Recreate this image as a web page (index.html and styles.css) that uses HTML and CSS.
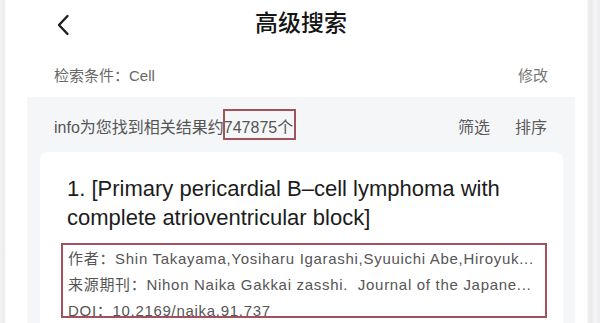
FILE: index.html
```html
<!DOCTYPE html>
<html lang="zh-CN">
<head>
<meta charset="utf-8">
<title>高级搜索</title>
<link rel="stylesheet" href="styles.css">
</head>
<body>
<div class="screen">
  <div class="edge-left"></div>
  <div class="main">
    <header class="header">
      <svg class="back" width="14" height="22" viewBox="0 0 14 22" aria-hidden="true">
        <polyline points="11.5,2 3,11 11.5,20" fill="none" stroke="#1e1e1e" stroke-width="2.4" stroke-linecap="round" stroke-linejoin="round"/>
      </svg>
      <h1 class="title">高级搜索</h1>
    </header>
    <div class="cond">
      <span>检索条件：Cell</span>
      <span class="edit">修改</span>
    </div>
    <section class="panel">
      <div class="info">
        <span>info为您找到相关结果约<span class="mark">747875个</span></span>
        <span class="actions"><span>筛选</span><span>排序</span></span>
      </div>
      <article class="card">
        <h2 class="card-title">1. [Primary pericardial B–cell lymphoma with complete atrioventricular block]</h2>
        <div class="meta">
          <p class="line">作者：Shin Takayama,Yosiharu Igarashi,Syuuichi Abe,Hiroyuk...</p>
          <p class="line">来源期刊：Nihon Naika Gakkai zasshi.&nbsp; Journal of the Japane...</p>
          <p class="line">DOI：10.2169/naika.91.737</p>
        </div>
      </article>
    </section>
  </div>
  <div class="edge-right"></div>
</div>
</body>
</html>
```

FILE: styles.css
```css
html, body {
  margin: 0;
  padding: 0;
  background: #ffffff;
}
body {
  width: 600px;
  height: 323px;
  overflow: hidden;
  font-family: "Liberation Sans", "Noto Sans CJK SC", sans-serif;
}
.screen {
  display: flex;
  height: 323px;
  overflow: hidden;
}
.edge-left {
  width: 6px;
  flex: none;
  background: linear-gradient(to right, #f4f4f6, #ececef 60%, #fafafa);
}
.edge-right {
  width: 13px;
  flex: none;
  margin-left: auto;
  background: linear-gradient(to right, #f4f4f6, #e9e9ec 30%, #f6f6f8 60%, #ececef);
}
.main {
  width: 548px;
  flex: none;
  margin-left: 21px;
  display: flex;
  flex-direction: column;
}
.header {
  flex: none;
  height: 48px;
  display: flex;
  align-items: center;
  position: relative;
  padding-left: 29px;
}
.back {
  margin-top: 1px;
}
.title {
  position: absolute;
  left: 0;
  right: 0;
  top: 10px;
  margin: 0;
  text-align: center;
  font-size: 23px;
  line-height: 26px;
  font-weight: 500;
  color: #151515;
  pointer-events: none;
}
.cond {
  flex: none;
  height: 49px;
  display: flex;
  justify-content: space-between;
  align-items: center;
  padding: 4px 27px 0;
  box-sizing: border-box;
  font-size: 15px;
  color: #686868;
}
.cond-latin {
  letter-spacing: 0.3px;
}
.edit {
  color: #767676;
}
.panel {
  flex: 1;
  display: flex;
  flex-direction: column;
  background: #f5f6f8;
  padding: 0 12px 0 13px;
}
.info {
  flex: none;
  display: flex;
  justify-content: space-between;
  align-items: center;
  padding: 20px 16px 13px 14px;
  font-size: 16px;
  line-height: 22px;
  color: #555555;
}
.mark {
  position: relative;
}
.mark::after {
  content: "";
  position: absolute;
  left: -1px;
  right: -3px;
  top: -10px;
  bottom: -4px;
  border: 2px solid #a3525d;
}
.actions {
  display: flex;
  gap: 25px;
  color: #5a5a5a;
}
.card {
  flex: 1;
  background: #ffffff;
  border-radius: 8px 8px 0 0;
  padding: 22px 16px 0 21px;
}
.card-title {
  margin: 0 0 11px 6px;
  font-size: 22px;
  line-height: 29px;
  font-weight: 400;
  color: #1c1c1c;
}
.meta {
  position: relative;
  padding: 3px 12px 0 7px;
}
.meta::before {
  content: "";
  position: absolute;
  left: 0;
  right: 0;
  top: 0;
  height: 71px;
  border: 2px solid #a3525d;
}
.line {
  margin: 0;
  font-size: 15px;
  line-height: 26px;
  letter-spacing: 0.7px;
  color: #555555;
  white-space: nowrap;
}
```
